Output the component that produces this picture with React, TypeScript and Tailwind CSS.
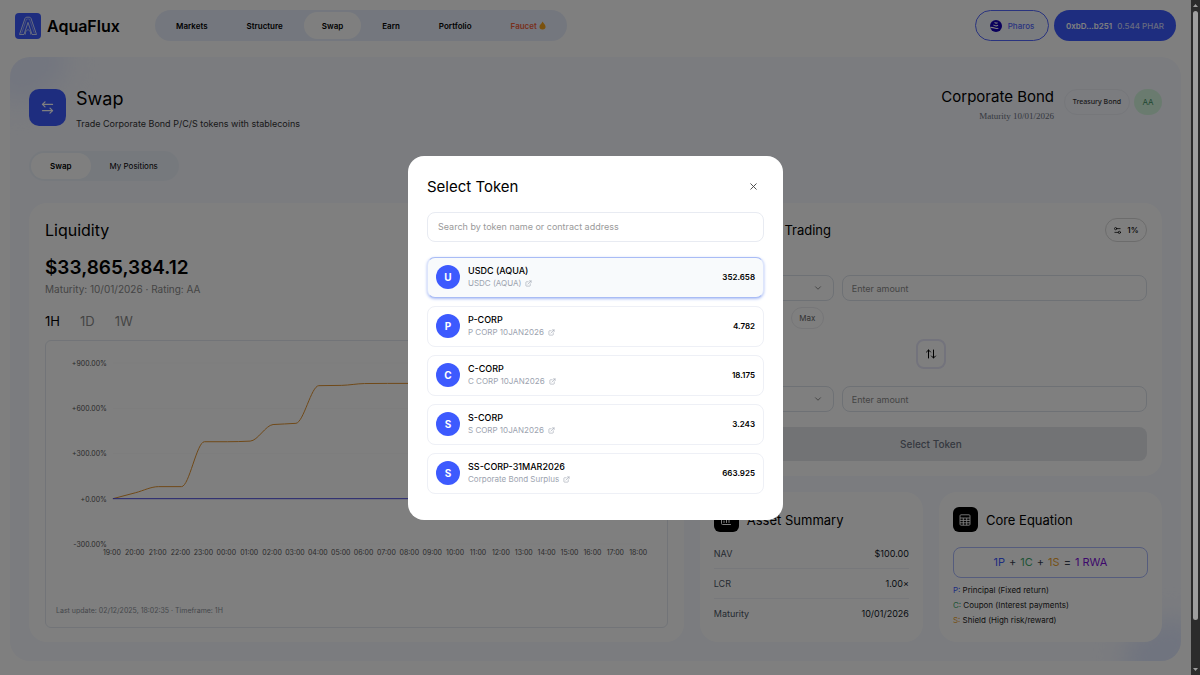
import { useState } from "react"
import { ArrowLeftRight, ArrowUpDown, ChartColumn, ChevronDown, ExternalLink, Settings2, X } from "lucide-react"

const navItems = ["Markets", "Structure", "Swap", "Earn", "Portfolio"]

const tokens = [
  { symbol: "USDC (AQUA)", name: "USDC (AQUA)", balance: "352.658" },
  { symbol: "P-CORP", name: "P CORP 10JAN2026", balance: "4.782" },
  { symbol: "C-CORP", name: "C CORP 10JAN2026", balance: "18.175" },
  { symbol: "S-CORP", name: "S CORP 10JAN2026", balance: "3.243" },
  { symbol: "SS-CORP-31MAR2026", name: "Corporate Bond Surplus", balance: "663.925" },
]

const summary = [
  { label: "NAV", value: "$100.00" },
  { label: "LCR", value: "1.00×" },
  { label: "Maturity", value: "10/01/2026" },
]

// percent change per hour, starting at 19:00
const shieldSeries = [0, 40, 80, 80, 378, 378, 382, 492, 500, 750, 752, 764, 765, 765, 765, 765, 765, 765, 765, 765, 765, 765, 765, 765]

const X0 = 67
const STEP = 22.93
const yOf = (v) => 158 - (v * 45.3) / 300

// monotone cubic through the points
const buildPath = (values) => {
  const d = values.slice(1).map((v, i) => (yOf(v) - yOf(values[i])) / STEP)
  const m = values.map((_, i) => {
    if (i === 0) return d[0]
    if (i === values.length - 1) return d[i - 1]
    const a = d[i - 1]
    const b = d[i]
    return a * b <= 0 ? 0 : (2 * a * b) / (a + b)
  })
  let path = `M${X0},${yOf(values[0])}`
  for (let i = 1; i < values.length; i++) {
    const xa = X0 + (i - 1) * STEP
    const xb = X0 + i * STEP
    const h = STEP / 3
    path += `C${xa + h},${yOf(values[i - 1]) + m[i - 1] * h} ${xb - h},${yOf(values[i]) - m[i] * h} ${xb},${yOf(values[i])}`
  }
  return path
}

const Logo = () => (
  <svg viewBox="0 0 26 26" className="h-[26px] w-[26px]" fill="none" aria-hidden="true">
    <rect width="26" height="26" rx="4" fill="#3d5afe" />
    <path d="M4.5 21.5 10 5.4Q10.5 4.2 11.8 4.2H14.2Q15.5 4.2 16 5.4L21.5 21.5H17L13 9.4 9 21.5Z" stroke="#dfe6ff" strokeWidth="0.9" />
    <path d="M6.6 20.4 11.6 6H14.4L19.4 20.4" stroke="#aebcff" strokeWidth="0.7" />
    <path d="M10.4 21.5V19L13 16.4 15.6 19V21.5" stroke="#dfe6ff" strokeWidth="0.8" />
  </svg>
)

const Header = () => (
  <header className="flex items-center justify-between px-[15px] pt-[10px]">
    <div className="flex items-center">
      <a href="#" className="flex w-[140px] items-center gap-[6px]">
        <Logo />
        <span className="text-base font-semibold leading-5">AquaFlux</span>
      </a>
      <nav className="flex h-[31px] items-center gap-[3px] rounded-full bg-[#e9effc] px-[3px] text-[8px] font-semibold">
        {navItems.map((item) => (
          <a key={item} href="#" className={`flex h-[27px] items-center rounded-full px-[18px] ${item === "Swap" ? "bg-white" : ""}`}>
            {item}
          </a>
        ))}
        <a href="#" className="flex h-[27px] items-center gap-[2px] rounded-full px-[18px] text-[#f0603a]">
          Faucet
          <svg viewBox="0 0 8 10" className="h-[9px] w-[7px]" aria-hidden="true">
            <path d="M4 0.5C5 2.5 7.5 4 7.5 6.5A3.5 3.2 0 0 1 0.5 6.5C0.5 4 3.3 3 4 0.5Z" fill="#f5a21b" />
          </svg>
        </a>
      </nav>
    </div>
    <div className="flex gap-[5px] text-[8px] font-medium">
      <button className="flex h-[31px] w-[74px] items-center justify-center gap-[6px] rounded-full border border-[#5468ff] bg-[#f5f8ff] text-[#5468ff]">
        <svg viewBox="0 0 12 12" className="h-3 w-3" fill="none" aria-hidden="true">
          <circle cx="6" cy="6" r="6" fill="#1400b8" />
          <path d="M4.6 2.4Q6 3.6 7.6 2.8M3.4 4.9Q6 6.6 8 5.2M0.4 7.4Q3 7.6 5.4 8.2T8.2 8" stroke="#fff" strokeWidth="1.1" />
        </svg>
        Pharos
      </button>
      <button className="flex h-[31px] w-[122px] items-center justify-center gap-[5px] rounded-full bg-[#3d5afe] text-white">
        <span className="font-semibold">0xbD...b251</span>
        <span className="text-[#ced6ff]">0.544 PHAR</span>
      </button>
    </div>
  </header>
)

const PageTitle = () => (
  <div className="flex items-start justify-between">
    <div className="flex gap-[10px]">
      <div className="flex h-[37px] w-[37px] items-center justify-center rounded-[10px] bg-[#3d5afe] text-white">
        <ArrowLeftRight size={15} strokeWidth={2} />
      </div>
      <div>
        <h1 className="text-[18px] leading-5">Swap</h1>
        <p className="mt-[9px] text-[9px] leading-3 text-[#333]">Trade Corporate Bond P/C/S tokens with stablecoins</p>
      </div>
    </div>
    <div className="flex items-start">
      <div className="text-right">
        <h2 className="text-[15px] leading-4">Corporate Bond</h2>
        <p className="mt-[5px] font-['Liberation_Serif',serif] text-[9px] leading-3 text-[#6b7280]">Maturity 10/01/2026</p>
      </div>
      <span className="ml-[10px] flex h-[26px] w-[66px] items-center justify-center rounded-full border border-[#eceff5] font-['Noto_Sans',sans-serif] text-[7px] font-medium text-[#333]">
        Treasury Bond
      </span>
      <span className="ml-1 flex h-[26px] w-7 items-center justify-center rounded-full bg-[#d5f7df] text-[8px] text-[#3f8f63]">AA</span>
    </div>
  </div>
)

const timeLabels = Array.from({ length: 24 }, (_, i) => String((19 + i) % 24).padStart(2, "0") + ":00")
const levels = [900, 600, 300, 0, -300]

const Liquidity = () => {
  const [range, setRange] = useState("1H")
  return (
    <section className="flex flex-col rounded-[18px] bg-white p-4 pb-[14px]">
      <h2 className="mt-[2px] text-base leading-[18px]">Liquidity</h2>
      <p className="mt-[17px] text-[19px] font-semibold leading-6">$33,865,384.12</p>
      <p className="mt-[3px] text-[10px] leading-3 text-[#8a8a8a]">Maturity: 10/01/2026 · Rating: AA</p>
      <div className="mt-[18px] flex gap-5 text-[13px] leading-4">
        {["1H", "1D", "1W"].map((r) => (
          <button key={r} onClick={() => setRange(r)} className={range === r ? "text-black" : "text-[#8a8a8a]"}>
            {r}
          </button>
        ))}
      </div>
      <div className="mt-[11px] flex flex-1 flex-col justify-between rounded-md border border-[#e4e9f0] pb-[10px]">
        <svg viewBox="0 0 622 220" className="w-full" fill="none">
          {levels.map((v) => (
            <g key={v}>
              <line x1={X0} x2="600" y1={yOf(v)} y2={yOf(v)} stroke="#fafafa" />
              <text x="61" y={yOf(v) + 3} textAnchor="end" fontSize="7" fill="#555">
                {(v >= 0 ? "+" : "") + v + ".00%"}
              </text>
            </g>
          ))}
          {timeLabels.map((t, i) => (
            <text key={t} x={X0 + i * STEP - 1} y="214" textAnchor="middle" fontSize="7" fill="#555">
              {t}
            </text>
          ))}
          <path d={buildPath(shieldSeries)} stroke="#e0922f" />
          <path d={`M${X0} 158H594`} stroke="#4646e0" />
        </svg>
        <p className="px-[10px] text-[7px] leading-3 text-[#8a8f98]">Last update: 02/12/2025, 18:02:35 · Timeframe: 1H</p>
      </div>
    </section>
  )
}

const AmountRow = ({ id, label }) => (
  <div>
    <label htmlFor={id} className="block text-[8px] leading-3 text-[#666]">{label}</label>
    <div className="mt-1 flex gap-2">
      <button aria-label={`${label} token`} className="flex h-[26px] w-[119px] items-center justify-end rounded-lg border border-[#dde2ea] px-[10px] text-[#777]">
        <ChevronDown size={10} />
      </button>
      <input id={id} placeholder="Enter amount" className="h-[26px] min-w-0 flex-1 rounded-lg border border-[#dde2ea] px-[9px] text-[9px] placeholder:text-[#8a8a8a]" />
    </div>
  </div>
)

const Trading = () => (
  <section className="rounded-[18px] bg-white px-[15px] py-[15px]">
    <div className="flex h-6 items-center justify-between">
      <h2 className="text-[13px] leading-4">Corp Bond Trading</h2>
      <button className="flex h-6 w-[42px] items-center justify-center gap-[5px] rounded-full border border-[#d9d9d9] text-[8px] font-medium">
        <Settings2 size={9} />
        1%
      </button>
    </div>
    <div className="mt-[17px]">
      <AmountRow id="from" label="From" />
    </div>
    <div className="mt-[6px] flex pl-[76px]">
      <button className="h-[22px] w-[33px] rounded-full border border-[#ececf0] text-[8px] text-[#666]">Max</button>
    </div>
    <div className="mt-[10px] flex justify-center">
      <button aria-label="Switch direction" className="flex h-[30px] w-[30px] items-center justify-center rounded-lg border-2 border-[#e6e6f8]">
        <ArrowUpDown size={12} />
      </button>
    </div>
    <div className="mt-px">
      <AmountRow id="to" label="To" />
    </div>
    <button className="mt-[15px] h-[34px] w-full rounded-lg bg-[#e5e7eb] text-[10px] font-medium text-[#6b7280]">Select Token</button>
  </section>
)

const CalculatorIcon = () => (
  <svg viewBox="0 0 12 12" className="h-3 w-3" fill="none" stroke="#fff" strokeWidth="0.9" aria-hidden="true">
    <rect x="1" y="0.8" width="10" height="10.4" rx="1" />
    <path d="M1 4H11M1 6.4H11M1 8.8H11M4.3 4V11.2M7.7 4V11.2" />
  </svg>
)

const CardTitle = ({ icon, title }) => (
  <div className="flex items-center gap-2">
    <div className="flex h-[25px] w-[25px] items-center justify-center rounded-md bg-black text-white">{icon}</div>
    <h2 className="text-[13px] leading-4">{title}</h2>
  </div>
)

const AssetSummary = () => (
  <section className="rounded-[18px] bg-white px-[14px] pt-[15px]">
    <CardTitle icon={<ChartColumn size={12} />} title="Asset Summary" />
    <dl className="mt-[7px] divide-y divide-[#eef1f6] text-[9px]">
      {summary.map((row) => (
        <div key={row.label} className="flex h-[30px] items-center justify-between">
          <dt className="text-[#4b5563]">{row.label}</dt>
          <dd className="text-[#111827]">{row.value}</dd>
        </div>
      ))}
    </dl>
  </section>
)

const CoreEquation = () => (
  <section className="rounded-[18px] bg-white px-[14px] pt-[15px]">
    <CardTitle icon={<CalculatorIcon />} title="Core Equation" />
    <p className="mt-[15px] flex h-[31px] items-center justify-center gap-1 rounded-lg border border-[#aab8fa] text-[11px] text-[#374151]">
      <span className="text-[#3d5afe]">1P</span>+<span className="text-[#3fa86c]">1C</span>+<span className="text-[#eda22d]">1S</span>=
      <span className="text-[#7c0fd8]">1 RWA</span>
    </p>
    <ul className="mt-[5px] text-[8px] leading-[15px] text-[#222]">
      <li><span className="text-[#3d5afe]">P:</span> Principal (Fixed return)</li>
      <li><span className="text-[#3fa86c]">C:</span> Coupon (Interest payments)</li>
      <li><span className="text-[#eda22d]">S:</span> Shield (High risk/reward)</li>
    </ul>
  </section>
)

const SelectTokenDialog = ({ onClose }) => (
  <div className="absolute inset-0 flex items-center justify-center bg-black/50">
    <div role="dialog" aria-modal="true" aria-labelledby="dialog-title" className="w-[375px] rounded-2xl bg-white px-[19px] pb-[26px] pt-5">
      <div className="flex items-center justify-between pr-[5px]">
        <h2 id="dialog-title" className="text-[15px] leading-[22px]">Select Token</h2>
        <button aria-label="Close" onClick={onClose} className="text-[#444]">
          <X size={11} />
        </button>
      </div>
      <input
        aria-label="Search tokens"
        placeholder="Search by token name or contract address"
        className="mt-[14px] block h-[30px] w-full rounded-lg border border-[#e8ebf2] px-[10px] text-[9px] placeholder:text-[#9a9a9a]"
      />
      <ul className="mt-[15px] flex flex-col gap-2">
        {tokens.map((token, i) => (
          <li
            key={token.symbol}
            className={`flex h-[41px] items-center gap-2 rounded-lg border px-2 ${i === 0 ? "border-x-[#dde5fb] border-y-[#a9bcf5] bg-[#f8fafc] shadow-[0_1px_3px_#a9bcf5]" : "border-[#eef0f6]"}`}
          >
            <span className="flex h-6 w-6 items-center justify-center rounded-full bg-[#3d5afe] text-[10px] font-bold text-white">{token.symbol[0]}</span>
            <div className="flex-1">
              <p className="text-[9px] font-medium leading-3">{token.symbol}</p>
              <p className="flex items-center gap-1 text-[8px] leading-3 text-[#9ca3af]">
                {token.name}
                <a href="#" aria-label={`View ${token.symbol} contract`}><ExternalLink size={7} /></a>
              </p>
            </div>
            <span className="text-[8px] font-semibold">{token.balance}</span>
          </li>
        ))}
      </ul>
    </div>
  </div>
)

const Scrollbar = () => (
  <div className="flex w-[9px] flex-col items-center justify-between bg-[#2c2c2c] py-1" aria-hidden="true">
    <svg viewBox="0 0 5 3" className="h-[3px] w-[5px]"><path d="M0 3 2.5 0 5 3Z" fill="#9f9f9f" /></svg>
    <div className="mb-12 mt-1 w-[5px] flex-1 rounded-full bg-[#9f9f9f]" />
    <svg viewBox="0 0 5 3" className="h-[3px] w-[5px]"><path d="M0 0 2.5 3 5 0Z" fill="#9f9f9f" /></svg>
  </div>
)

const App = () => {
  const [open, setOpen] = useState(true)
  const [tab, setTab] = useState("Swap")

  return (
    <div className="flex min-h-screen bg-white font-['Inter',sans-serif] text-black">
      <div className="relative min-w-0 flex-1 pb-[14px]">
        <Header />
        <main className="relative mx-[10px] mt-4 overflow-hidden rounded-[20px] bg-[#f6f8ff] px-[19px] pb-[19px] pt-8">
          <div className="absolute -left-5 -top-4 h-14 w-20 rotate-[-35deg] rounded-full bg-[#e6ecff] blur-md" />
          <div className="absolute -bottom-5 -right-5 h-14 w-20 rotate-[-35deg] rounded-full bg-[#e0e8ff] blur-md" />
          <div className="relative">
            <PageTitle />
            <div className="mt-[21px] flex h-[30px] w-fit items-center rounded-full bg-[#edf3fb] p-[2px] text-[8px]">
              {["Swap", "My Positions"].map((t) => (
                <button key={t} onClick={() => setTab(t)} className={`h-[26px] rounded-full px-[19px] ${tab === t ? "bg-white font-semibold" : ""}`}>
                  {t}
                </button>
              ))}
            </div>
            <div className="mt-[22px] grid grid-cols-[17fr_12fr] gap-4">
              <Liquidity />
              <div className="flex flex-col gap-4">
                <Trading />
                <div className="grid h-[150px] grid-cols-2 gap-4">
                  <AssetSummary />
                  <CoreEquation />
                </div>
              </div>
            </div>
          </div>
        </main>
        {open && <SelectTokenDialog onClose={() => setOpen(false)} />}
      </div>
      <Scrollbar />
    </div>
  )
}

export default App
